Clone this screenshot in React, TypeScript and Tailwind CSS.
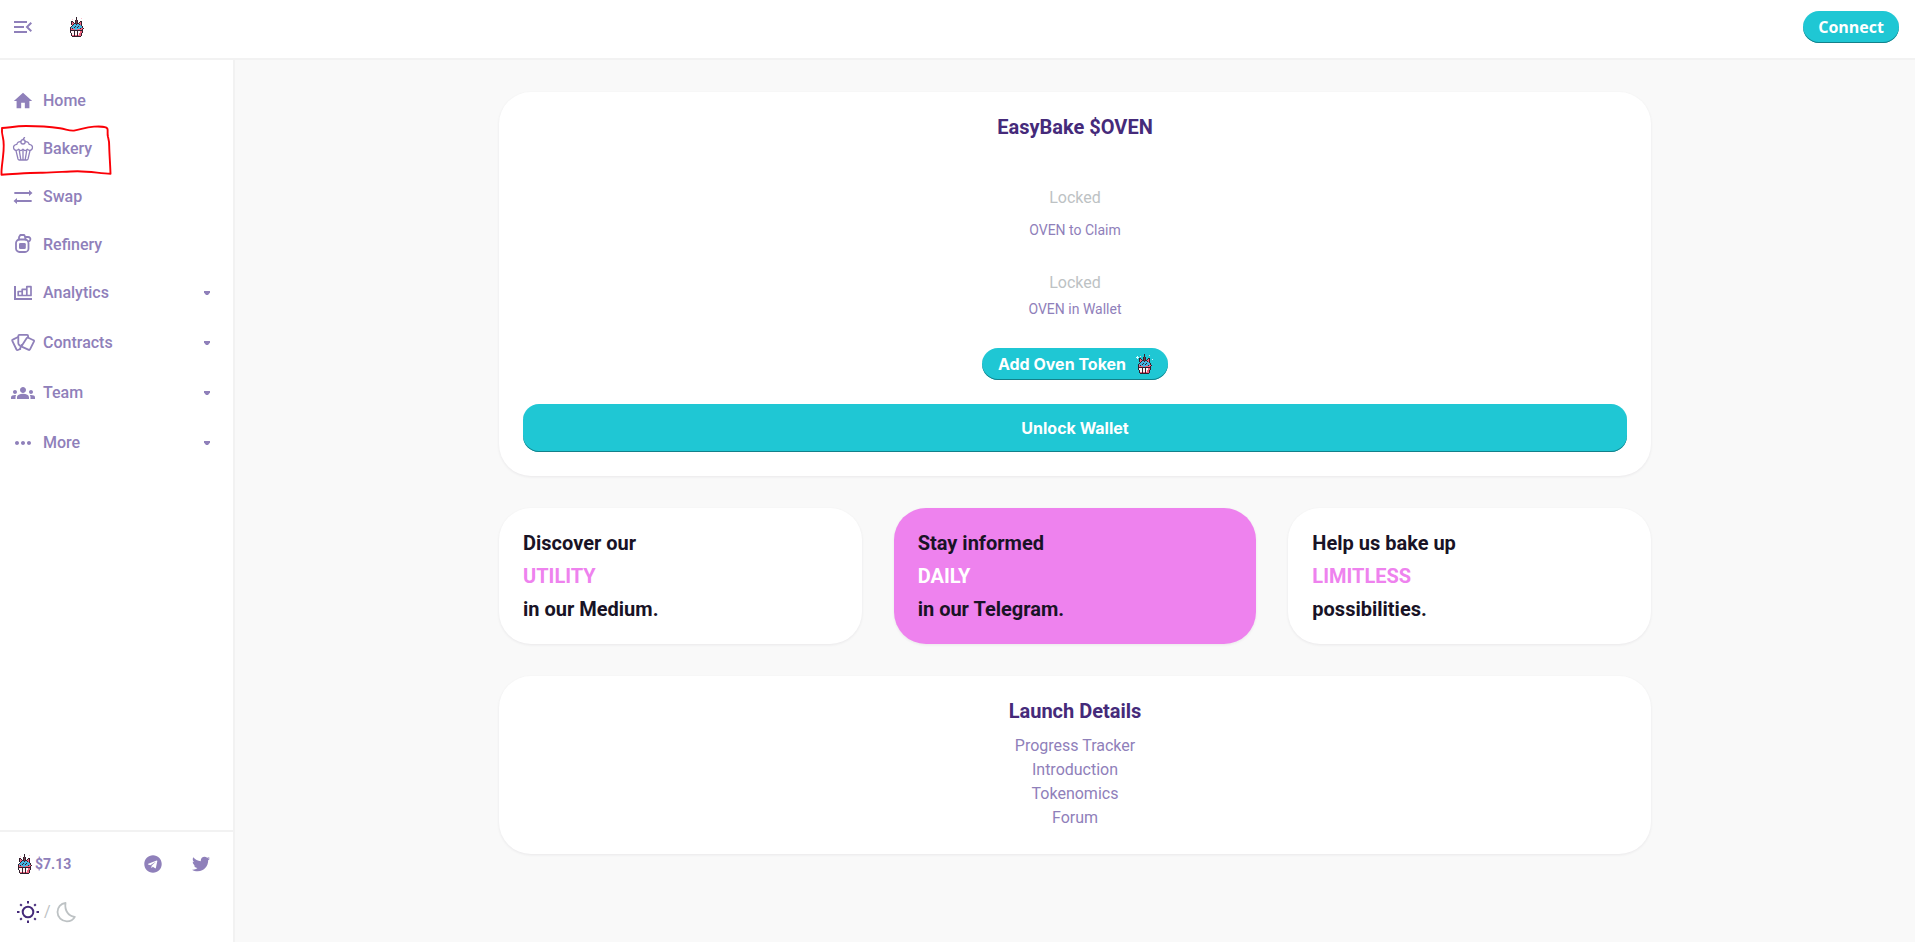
import type { ReactNode } from "react";
import { MdGroups, MdHome, MdMenuOpen, MdMoreHoriz } from "react-icons/md";
import { FaTelegram, FaTwitter } from "react-icons/fa";

const SPRITE = [
  "......k.......",
  "......k....l..",
  "..l...k.......",
  ".....kck......",
  ".kk..kck..kk..",
  ".kpk.kck.kpk..",
  ".kppkkckkppk..",
  ".kpkbbkbbkpk..",
  "..kbbbbbbbbk..",
  ".kbbbkbbkbbbk.",
  "kbbbkbbkbbbbk.",
  "kpkbbbbbbbkppk",
  "kppppbbpppppk.",
  "kkkkkkkkkkkkk.",
  "kwwwkwwkwwppk.",
  "kwwwkwwkwwppk.",
  ".kwwkwwkwppk..",
  ".kwwkwwkwppk..",
  ".kppkppkpppk..",
  "..kkkkkkkkk...",
];

const SPRITE_COLORS: Record<string, string> = {
  k: "#33202e",
  p: "#f0647f",
  b: "#45b4e2",
  w: "#fff4f6",
  c: "#6b3a48",
  l: "#fbc4d0",
};

function Unicake({ sparkle = false }: { sparkle?: boolean }) {
  return (
    <svg
      width="14"
      height="20"
      viewBox="0 0 14 20"
      shapeRendering="crispEdges"
      className="overflow-visible"
      aria-hidden="true"
    >
      {SPRITE.flatMap((row, y) =>
        [...row].map((c, x) =>
          c === "." ? null : (
            <rect key={`${x}-${y}`} x={x} y={y} width="1" height="1" fill={SPRITE_COLORS[c]} />
          ),
        ),
      )}
      {sparkle && <path d="M-1 2h1v1h1v1H0v1h-1V4h-1V3h1zM14 5h1v1h-1z" fill="#d8fbff" />}
    </svg>
  );
}

function Line({ children }: { children: ReactNode }) {
  return (
    <svg
      width="24"
      height="24"
      viewBox="0 0 24 24"
      fill="none"
      stroke="currentColor"
      strokeWidth="1.8"
      strokeLinejoin="round"
      strokeLinecap="round"
      aria-hidden="true"
    >
      {children}
    </svg>
  );
}

const CupcakeIcon = () => (
  <Line>
    <g strokeWidth="1.3">
      <circle cx="12" cy="4.8" r="2.2" />
      <path d="M12.2 2.6c.1-1 .6-1.600 1.300-2" />
      <path d="M9.9 4.600C7.600 4.300 6 5.600 5.900 7.300 3.700 7.500 2.100 9 2.600 11.100c.3 1.500 1.500 2.300 2.900 2.300.9 0 1.600-.5 2.100-1.200.6 1 1.400 1.400 2.200 1.400 1 0 1.700-.6 2.200-1.400.5.8 1.200 1.400 2.200 1.400.8 0 1.600-.4 2.200-1.400.5.7 1.200 1.200 2.100 1.200 1.400 0 2.600-.8 2.900-2.300.5-2.100-1.100-3.600-3.300-3.800-.1-1.700-1.700-3-4-2.700" />
      <path d="m5 13.600 2 8.400c.2.700.6 1 1.300 1h7.400c.7 0 1.100-.3 1.300-1l2-8.400M8.300 13.600l1.500 9M15.700 13.600l-1.500 9M12 13.400v9" />
    </g>
  </Line>
);

const SwapIcon = () => (
  <Line>
    <path d="M4 8h15M5 16h15" />
    <path d="m18 5 3.500 3-3.500 3zM6 13l-3.500 3L6 19z" fill="currentColor" stroke="none" />
  </Line>
);

const RefineryIcon = () => (
  <Line>
    <rect x="5" y="6.500" width="12.500" height="12.500" rx="3.500" />
    <rect x="8" y="10" width="6.800" height="6" rx="1.300" fill="currentColor" stroke="none" />
    <path d="M8 6.500V4.200L9.300 2h3.900l1.100 2.200v2.300" />
    <path d="M14.300 4h2.700c1.800 0 2.700 1.300 2.300 2.700-.3 1-1 1.600-2 1.600" />
  </Line>
);

const AnalyticsIcon = () => (
  <Line>
    <path d="M4 5v13h17" strokeWidth="2" strokeLinecap="butt" strokeLinejoin="miter" />
    <path d="M7.200 14.500v-4h4v4zM11.200 14.500V8.300h4.600v6.200zM15.800 14.500V5.700H20v8.800z" strokeWidth="1.700" />
  </Line>
);

const ContractsIcon = () => (
  <Line>
    <path d="m9.300 18-2.500 1c-.6.200-1 0-1.300-.5L1.300 9.800c-.2-.6 0-1 .5-1.200l4.800-2.400" />
    <path d="M9 14.700c-1-.6-1.700-1.400-1.700-2.400V5c0-.7.400-1.100 1.100-1.100H16c.7 0 1.100.4 1.100 1.100v1.400" />
    <path d="m17.300 6.700 5.200 2.500c.5.200.7.700.5 1.200l-4 8c-.3.500-.7.700-1.200.5l-6.600-3c-.5-.3-.7-.7-.4-1.200l4.800-7.500c.4-.6 1-.8 1.700-.5z" />
    <path d="m10.500 14-1.500 4" />
  </Line>
);

const SunIcon = () => (
  <svg width="24" height="24" viewBox="0 0 24 24" fill="none" stroke="#452a7a" strokeWidth="2" aria-hidden="true">
    <circle cx="12" cy="12" r="5.300" />
    <path d="M12 1v2.500M12 20.500V23M1 12h2.500M20.500 12H23M4.200 4.200l1.600 1.600M18.200 18.200l1.600 1.600M4.200 19.800l1.600-1.600M18.200 5.800l1.600-1.600" />
  </svg>
);

const MoonIcon = () => (
  <svg
    width="24"
    height="24"
    viewBox="0 0 24 24"
    fill="none"
    stroke="#bdc2c4"
    strokeWidth="1.8"
    strokeLinejoin="round"
    aria-hidden="true"
  >
    <path d="M10.500 3C5.800 3.300 2.500 7.300 2.500 12c0 5.300 4.200 9.300 9.300 9.300 3.700 0 6.500-1.500 8-4.500-6.500-.3-10.300-6.300-9.300-13.800z" />
  </svg>
);

const Caret = () => (
  <svg width="6" height="4" viewBox="0 0 6 4" fill="currentColor" className="ml-auto" aria-hidden="true">
    <path d="M0 0h6v1.500L4 4H2L0 1.500z" />
  </svg>
);

const NAV: { label: string; icon: ReactNode; menu?: boolean }[] = [
  { label: "Home", icon: <MdHome size={22} /> },
  { label: "Bakery", icon: <CupcakeIcon /> },
  { label: "Swap", icon: <SwapIcon /> },
  { label: "Refinery", icon: <RefineryIcon /> },
  { label: "Analytics", icon: <AnalyticsIcon />, menu: true },
  { label: "Contracts", icon: <ContractsIcon />, menu: true },
  { label: "Team", icon: <MdGroups size={24} />, menu: true },
  { label: "More", icon: <MdMoreHoriz size={24} />, menu: true },
];

const PROMOS = [
  { top: "Discover our", accent: "UTILITY", bottom: "in our Medium.", active: false },
  { top: "Stay informed", accent: "DAILY", bottom: "in our Telegram.", active: true },
  { top: "Help us bake up", accent: "LIMITLESS", bottom: "possibilities.", active: false },
];

const LINKS = ["Progress Tracker", "Introduction", "Tokenomics", "Forum"];

function NavItem({ label, icon, menu }: { label: string; icon: ReactNode; menu?: boolean }) {
  const inner = (
    <>
      <span className="flex w-6 justify-center">{icon}</span>
      <span>{label}</span>
    </>
  );
  if (menu) {
    return (
      <button
        type="button"
        className="flex h-[50px] w-full items-center gap-2 border-b-2 border-transparent pr-[23px] pl-[11px] text-left"
      >
        {inner}
        <Caret />
      </button>
    );
  }
  return (
    <a href="#" className="flex h-12 items-center gap-2 pl-[11px]">
      {inner}
    </a>
  );
}

export default function App() {
  return (
    <div className="flex min-h-screen flex-col bg-[#f9f9f9] font-['Roboto',sans-serif] text-base text-[#8f80ba]">
      <header className="flex h-[60px] items-center justify-between border-b-2 border-[#f2f2f2] bg-white pr-4 pb-1 pl-[11px]">
        <div className="flex items-center gap-[35px]">
          <button type="button" aria-label="Close menu">
            <MdMenuOpen size={24} />
          </button>
          <a href="#" aria-label="Home page">
            <Unicake />
          </a>
        </div>
        <button
          type="button"
          className="h-8 rounded-full bg-[#1fc7d4] px-[15px] font-['Open_Sans',sans-serif] font-bold text-white shadow-[inset_0_-1px_0_#14808a]"
        >
          Connect
        </button>
      </header>

      <div className="flex flex-1">
        <aside className="relative flex w-[235px] shrink-0 flex-col border-r-2 border-[#f2f2f2] bg-white">
          <nav className="flex-1 pt-[17px] font-medium">
            {NAV.map((item) => (
              <NavItem key={item.label} {...item} />
            ))}
          </nav>
          <svg
            className="pointer-events-none absolute top-[64px] left-0"
            width="114"
            height="54"
            viewBox="0 124 114 54"
            fill="none"
            stroke="#fb0007"
            strokeWidth="1.900"
            strokeLinejoin="round"
            aria-hidden="true"
          >
            <path d="M2 128c7-.2 12-1.800 24-2 12 0 24 .8 34 2.300 7 1.200 9 2.700 14 2.300 7-1 11-3.600 20-4 6-.2 13-.4 13.500 2.400.5 2.600-.4 4 .5 8 .8 3.200 1.500 5.500 1.200 9 .2 9 1 18 1.300 27.700-10-.2-19-2.300-33-2.500-12 0-21 1.600-36 1.500-15-.1-26 1.500-40 2-.3-6 1-12 1.500-18C4 148 4.300 143 3 138c-1-4-1.400-7-1-10z" />
          </svg>
          <div className="border-t-2 border-[#f2f2f2] px-4 pt-2 pb-[6px]">
            <div className="flex h-12 items-center">
              <a href="#" className="flex items-center gap-[3px] pl-[2px] text-sm font-bold">
                <Unicake />
                $7.13
              </a>
              <div className="ml-auto flex gap-[30px] pr-[7px]">
                <a href="#" aria-label="Telegram">
                  <FaTelegram size={18} />
                </a>
                <a href="#" aria-label="Twitter">
                  <FaTwitter size={18} />
                </a>
              </div>
            </div>
            <button type="button" aria-label="Toggle theme" className="flex h-12 items-center gap-1 text-[#bdc2c4]">
              <SunIcon />
              <span>/</span>
              <MoonIcon />
            </button>
          </div>
        </aside>

        <main className="min-w-0 flex-1 px-6 py-8">
          <div className="mx-auto flex max-w-6xl flex-col gap-8">
            <section className="flex flex-col items-center rounded-[32px] bg-white p-6 shadow-[0_1px_3px_rgba(25,19,38,0.07)]">
              <h2 className="text-xl leading-[22px] font-bold text-[#452a7a]">EasyBake $OVEN</h2>
              <p className="mt-12 leading-6 text-[#bdc2c4]">Locked</p>
              <p className="mt-2 text-sm leading-6">OVEN to Claim</p>
              <p className="mt-[29px] leading-6 text-[#bdc2c4]">Locked</p>
              <p className="mt-1 text-sm leading-5">OVEN in Wallet</p>
              <button
                type="button"
                className="mt-[29px] flex h-8 items-center gap-3 rounded-full bg-[#1fc7d4] px-4 font-['Inter',sans-serif] font-bold text-white shadow-[inset_0_-1px_0_#14808a]"
              >
                Add Oven Token
                <Unicake sparkle />
              </button>
              <button
                type="button"
                className="mt-6 h-12 w-full rounded-2xl bg-[#1fc7d4] font-['Inter',sans-serif] font-bold text-white shadow-[inset_0_-1px_0_#14808a]"
              >
                Unlock Wallet
              </button>
            </section>

            <div className="grid grid-cols-3 gap-8">
              {PROMOS.map((p) => (
                <a
                  key={p.accent}
                  href="#"
                  className={`flex flex-col gap-[11px] rounded-[32px] p-6 text-xl leading-[22px] font-bold text-[#191326] shadow-[0_1px_3px_rgba(25,19,38,0.07)] ${
                    p.active ? "bg-[#ee82ee]" : "bg-white"
                  }`}
                >
                  <span>{p.top}</span>
                  <span className={p.active ? "text-white" : "text-[#ee82ee]"}>{p.accent}</span>
                  <span>{p.bottom}</span>
                </a>
              ))}
            </div>

            <section className="flex flex-col items-center rounded-[32px] bg-white p-6 shadow-[0_1px_3px_rgba(25,19,38,0.07)]">
              <h2 className="mb-3 text-xl leading-[22px] font-bold text-[#452a7a]">Launch Details</h2>
              {LINKS.map((l) => (
                <a key={l} href="#" className="leading-6">
                  {l}
                </a>
              ))}
            </section>
          </div>
        </main>
      </div>
    </div>
  );
}
